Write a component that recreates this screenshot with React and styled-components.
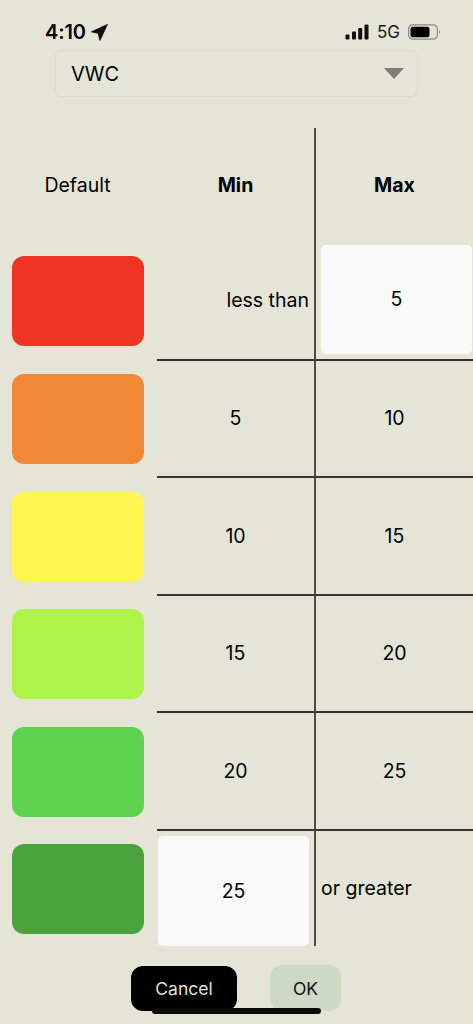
import React from 'react'
import styled, { createGlobalStyle } from 'styled-components'

const GlobalStyle = createGlobalStyle`
  html, body {
    margin: 0;
    padding: 0;
    background: #e4e5d7;
  }
  * {
    box-sizing: border-box;
  }
`

const Screen = styled.div`
  position: relative;
  width: 473px;
  height: 1024px;
  overflow: hidden;
  background: #e4e5d7;
  color: #000;
  font-family: Inter, 'Liberation Sans', sans-serif;
`

const StatusBar = styled.div`
  display: flex;
  align-items: center;
  justify-content: space-between;
  height: 50px;
  padding: 14px 32px 0 45px;
`

const Clock = styled.div`
  display: flex;
  align-items: center;
  gap: 5px;
  font-size: 20px;
  font-weight: 600;
  letter-spacing: -0.1px;
`

const StatusIcons = styled.div`
  display: flex;
  align-items: center;
  gap: 8px;
  font-size: 17px;
  color: #1a1a1a;
`

const SelectBox = styled.div`
  display: flex;
  align-items: center;
  justify-content: space-between;
  width: 363px;
  height: 47px;
  margin-left: 55px;
  padding: 0 13px 0 15px;
  border: 1px solid #dcddd2;
  border-radius: 6px;
  font-size: 20px;
`

const Caret = styled.div`
  width: 0;
  height: 0;
  border-left: 10px solid transparent;
  border-right: 10px solid transparent;
  border-top: 11px solid #7d7d7a;
`

const Table = styled.div`
  display: grid;
  grid-template-columns: 157px 157px 159px;
  grid-template-rows: 114.5px 118px 117.5px 117.5px 117.5px 117.5px 115.5px;
  margin-top: 31px;
`

const Cell = styled.div`
  display: flex;
  align-items: center;
  justify-content: center;
  font-size: 19.5px;
  font-weight: ${(p) => (p.$bold ? 700 : 400)};
  border-bottom: ${(p) => (p.$last || p.$head ? 'none' : '2px solid #33352e')};
`

const MinCell = styled(Cell)`
  justify-content: ${(p) => (p.$end ? 'flex-end' : 'center')};
  padding-right: ${(p) => (p.$end ? '5px' : '0')};
  padding-bottom: ${(p) => (p.$end ? '2px' : '0')};
`

const MaxCell = styled(Cell)`
  justify-content: ${(p) => (p.$start ? 'flex-start' : 'center')};
  padding-left: ${(p) => (p.$start ? '5px' : '0')};
  border-left: 2px solid #4a4b42;
`

const SwatchCell = styled.div`
  display: flex;
  align-items: center;
  padding-left: 12px;
  padding-top: ${(p) => (p.$last ? '1px' : '0')};
  padding-bottom: ${(p) => (p.$first ? '1px' : '0')};
`

const HeadLabel = styled.div`
  width: 131px;
  text-align: center;
  font-size: 19.5px;
`

const Swatch = styled.div`
  width: 132px;
  height: 90px;
  border-radius: 12px;
  background: ${(p) => p.$color};
`

const InputBox = styled.div`
  display: flex;
  align-items: center;
  justify-content: center;
  width: 151px;
  height: 109.5px;
  border-radius: 5px;
  background: #f9f9f9;
  align-self: flex-start;
`

const FirstInput = styled(InputBox)`
  margin-top: 2px;
`

const LastInput = styled(InputBox)`
  margin-top: 5.5px;
  margin-left: 1px;
  margin-right: 5px;
`

const Footer = styled.div`
  display: flex;
  justify-content: flex-start;
  gap: 33px;
  margin-top: 19px;
  padding-left: 131px;
`

const Button = styled.div`
  display: flex;
  align-items: center;
  justify-content: center;
  width: ${(p) => (p.$primary ? '106px' : '71px')};
  height: ${(p) => (p.$primary ? '45px' : '46px')};
  margin-top: ${(p) => (p.$primary ? '1px' : '0')};
  border-radius: 12px;
  font-size: 17.5px;
  background: ${(p) => (p.$primary ? '#000' : '#cfdac6')};
  color: ${(p) => (p.$primary ? '#dfe3d2' : '#111')};
`

const HomeIndicator = styled.div`
  position: absolute;
  left: 152px;
  top: 1008px;
  width: 169px;
  height: 6px;
  border-radius: 3px;
  background: #0b0b0b;
`

const LocationArrow = () => (
  <svg width="17" height="17" viewBox="0 0 16 16">
    <path d="M15.4 0.4 L0.4 7.4 L6.8 8.8 L8.4 15.6 Z" fill="#111" stroke="#111" strokeWidth="0.8" strokeLinejoin="round" />
  </svg>
)

const SignalBars = () => (
  <svg width="24" height="16" viewBox="0 0 24 16">
    <rect x="0.5" y="10.5" width="4" height="5" rx="1" fill="#111" />
    <rect x="7" y="7.5" width="4" height="8" rx="1" fill="#111" />
    <rect x="13.2" y="4" width="4" height="11.5" rx="1" fill="#111" />
    <rect x="19.5" y="0.5" width="4" height="15" rx="1" fill="#111" />
  </svg>
)

const Battery = () => (
  <svg width="33" height="16" viewBox="0 0 33 16">
    <rect x="0.6" y="0.8" width="28.8" height="14.4" rx="4.2" fill="none" stroke="#8a8a82" strokeWidth="1.2" />
    <rect x="2.5" y="2.7" width="19" height="10.6" rx="2.6" fill="#000" />
    <path d="M31 6 C32.2 6.4 32.2 9.6 31 10 Z" fill="#8a8a82" />
  </svg>
)

const colors = ['#ee3524', '#f18835', '#fff64f', '#adf34a', '#5dd24e', '#4aa33d']
const ranges = [
  [5, 10],
  [10, 15],
  [15, 20],
  [20, 25],
]

const App = () => (
  <Screen>
    <GlobalStyle />
    <StatusBar>
      <Clock>
        4:10
        <LocationArrow />
      </Clock>
      <StatusIcons>
        <SignalBars />
        <span>5G</span>
        <Battery />
      </StatusIcons>
    </StatusBar>
    <SelectBox>
      VWC
      <Caret />
    </SelectBox>
    <Table>
      <SwatchCell>
        <HeadLabel>Default</HeadLabel>
      </SwatchCell>
      <MinCell $head $bold>Min</MinCell>
      <MaxCell $head $bold>Max</MaxCell>

      <SwatchCell $first>
        <Swatch $color={colors[0]} />
      </SwatchCell>
      <MinCell $end>less than</MinCell>
      <MaxCell $start>
        <FirstInput>5</FirstInput>
      </MaxCell>

      {ranges.map(([min, max], i) => (
        <React.Fragment key={min}>
          <SwatchCell>
            <Swatch $color={colors[i + 1]} />
          </SwatchCell>
          <MinCell>{min}</MinCell>
          <MaxCell>{max}</MaxCell>
        </React.Fragment>
      ))}

      <SwatchCell $last>
        <Swatch $color={colors[5]} />
      </SwatchCell>
      <MinCell $last>
        <LastInput>25</LastInput>
      </MinCell>
      <MaxCell $last $start>or greater</MaxCell>
    </Table>
    <Footer>
      <Button $primary>Cancel</Button>
      <Button>OK</Button>
    </Footer>
    <HomeIndicator />
  </Screen>
)

export default App
